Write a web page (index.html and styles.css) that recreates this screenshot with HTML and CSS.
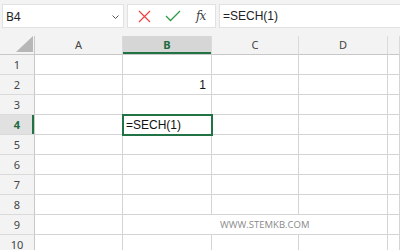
FILE: index.html
```html
<!DOCTYPE html>
<html lang="en">

<head>
    <meta charset="UTF-8">
    <title>SECH</title>
    <link rel="stylesheet" href="styles.css">
</head>

<body>
    <div class="toolbar">
        <div class="namebox">
            <span>B4</span>
            <svg class="chev" width="7" height="4" viewBox="0 0 7 4"><path d="M0.5 0.5 L3.5 3.5 L6.5 0.5" fill="none" stroke="#555" stroke-width="1"/></svg>
        </div>
        <div class="buttons">
            <svg width="13" height="13" viewBox="0 0 13 13"><path d="M1 1 L12 12 M12 1 L1 12" stroke="#ee4040" stroke-width="1.2" fill="none"/></svg>
            <svg width="16" height="12" viewBox="0 0 16 12"><path d="M1 6 L5.5 10.5 L15 1" stroke="#2f9a4a" stroke-width="1.3" fill="none"/></svg>
            <span class="fx">fx</span>
        </div>
        <div class="formula">=SECH(1)</div>
    </div>

    <div class="sheet">
        <div class="corner"><svg width="17" height="16" viewBox="0 0 17 16"><polygon points="0,16 17,16 17,0" fill="#b7b7b7"/></svg></div>
        <div class="colhead">A</div>
        <div class="colhead active">B</div>
        <div class="colhead">C</div>
        <div class="colhead">D</div>
        <div class="colhead"></div>

        <div class="rowhead">1</div><div class="cell"></div><div class="cell"></div><div class="cell"></div><div class="cell"></div><div class="cell"></div>
        <div class="rowhead">2</div><div class="cell"></div><div class="cell num">1</div><div class="cell"></div><div class="cell"></div><div class="cell"></div>
        <div class="rowhead">3</div><div class="cell"></div><div class="cell"></div><div class="cell"></div><div class="cell"></div><div class="cell"></div>
        <div class="rowhead active">4</div><div class="cell"></div><div class="cell sel">=SECH(1)</div><div class="cell"></div><div class="cell"></div><div class="cell"></div>
        <div class="rowhead">5</div><div class="cell"></div><div class="cell"></div><div class="cell"></div><div class="cell"></div><div class="cell"></div>
        <div class="rowhead">6</div><div class="cell"></div><div class="cell"></div><div class="cell"></div><div class="cell"></div><div class="cell"></div>
        <div class="rowhead">7</div><div class="cell"></div><div class="cell"></div><div class="cell"></div><div class="cell"></div><div class="cell"></div>
        <div class="rowhead">8</div><div class="cell"></div><div class="cell"></div><div class="cell"></div><div class="cell"></div><div class="cell"></div>
        <div class="rowhead">9</div><div class="cell"></div><div class="cell"></div><div class="cell"></div><div class="cell"></div><div class="cell"></div>
        <div class="rowhead">10</div><div class="cell"></div><div class="cell"></div><div class="cell"></div><div class="cell"></div><div class="cell"></div>
    </div>

    <div class="watermark">WWW.STEMKB.COM</div>
</body>

</html>
```

FILE: styles.css
```css
* {
    box-sizing: border-box;
}

body {
    margin: 0;
    width: 400px;
    height: 250px;
    overflow: hidden;
    background-color: #ffffff;
    font-family: "Liberation Sans", Arial, sans-serif;
    position: relative;
}

.toolbar {
    height: 36px;
    background-color: #f3f3f3;
    display: flex;
    align-items: flex-start;
    gap: 3px;
    padding: 4px 0 0 2px;
}

.namebox {
    width: 122px;
    height: 24px;
    background-color: #fff;
    border: 1px solid #e1e1e1;
    display: flex;
    align-items: center;
    justify-content: space-between;
    padding: 0 4px 0 3px;
    font-family: "Noto Sans", sans-serif;
    font-size: 12px;
    color: #222;
}

.chev {
    margin-top: 2px;
}

.buttons {
    width: 89px;
    height: 24px;
    background-color: #fff;
    border: 1px solid #e1e1e1;
    display: flex;
    align-items: center;
    padding: 0 0 0 10px;
    gap: 14px;
}

.fx {
    font-family: "DejaVu Serif", serif;
    font-style: italic;
    font-size: 12px;
    color: #444;
    margin-left: 1px;
    letter-spacing: -1px;
}

.formula {
    flex: 1;
    height: 24px;
    background-color: #fff;
    border: 1px solid #e1e1e1;
    border-right: none;
    padding: 4px 0 0 3px;
    font-size: 12px;
    color: #222;
}

.sheet {
    display: grid;
    grid-template-columns: 35px 88px 89px 87px 89px 1fr;
    grid-template-rows: 19px;
    grid-auto-rows: 20px;
}

.corner {
    background-color: #f3f3f3;
    border-right: 1px solid #c8c8c8;
    border-bottom: 1px solid #c8c8c8;
    display: flex;
    align-items: flex-end;
    justify-content: flex-end;
    padding: 0 1px 2px 0;
}

.colhead {
    background-color: #f3f3f3;
    border-right: 1px solid #dadada;
    border-bottom: 1px solid #c8c8c8;
    font-family: "Noto Sans", sans-serif;
    font-size: 11px;
    color: #444;
    text-align: center;
    line-height: 18px;
}

.colhead.active {
    background-color: #d6d6d6;
    color: #1e6b3f;
    font-weight: bold;
    box-shadow: inset 0 -2px 0 #217346;
}

.rowhead {
    background-color: #f3f3f3;
    border-right: 1px solid #c8c8c8;
    border-bottom: 1px solid #dadada;
    font-family: "Noto Sans", sans-serif;
    font-size: 11px;
    color: #444;
    text-align: center;
    line-height: 20px;
}

.rowhead.active {
    background-color: #e1e1e1;
    color: #1e6b3f;
    font-weight: bold;
    box-shadow: inset -2px 0 0 #217346;
}

.cell {
    border-right: 1px solid #d4d4d4;
    border-bottom: 1px solid #d4d4d4;
    font-size: 12px;
    color: #111;
    line-height: 20px;
    padding: 0 3px;
    white-space: nowrap;
}

.cell.num {
    text-align: right;
    padding-right: 5px;
}

.cell.sel {
    position: relative;
    outline: 2px solid #217346;
    outline-offset: -1px;
    padding-left: 3px;
}

/* watermark sits over the grid */
.watermark {
    position: absolute;
    left: 210px;
    top: 215px;
    width: 176px;
    height: 19px;
    background-color: #fff;
    font-family: "Open Sans", sans-serif;
    font-size: 9.5px;
    color: #8a8a8a;
    padding: 3px 0 0 10px;
}
```
